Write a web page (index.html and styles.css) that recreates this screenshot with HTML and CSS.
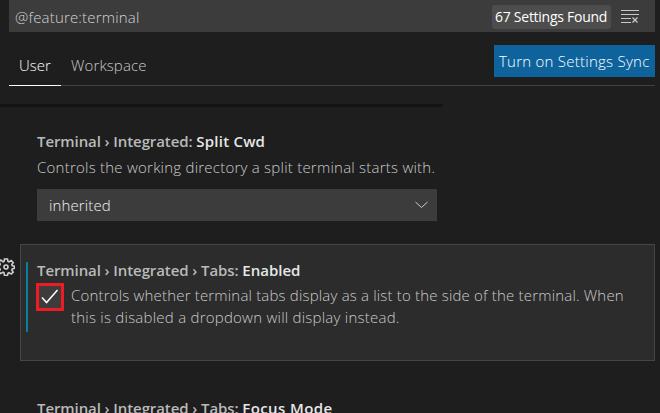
FILE: index.html
```html
<!DOCTYPE html>
<html lang="en">
<head>
<meta charset="utf-8">
<title>Settings</title>
<link rel="stylesheet" href="styles.css">
</head>
<body>
<main class="editor">
  <div class="search">
    <span class="query">@feature:terminal</span>
    <span class="count">67 Settings Found</span>
    <svg class="clear" width="19" height="14" viewBox="0 0 19 14" fill="none" stroke="#c8c8c8"><path d="M0 .5h18M0 4.500h18M0 8.500h10M0 12.500h10"/><path d="M11.500 7.500l5 5M16.500 7.500l-5 5" stroke-width="1.300"/></svg>
  </div>
  <nav class="tabs">
    <span class="tab active">User</span>
    <span class="tab">Workspace</span>
    <button class="sync">Turn on Settings Sync</button>
  </nav>
  <div class="shadow"></div>
  <section class="setting">
    <h2><span class="path">Terminal › Integrated: </span><span class="name split">Split Cwd</span></h2>
    <p class="cwd">Controls the working directory a split terminal starts with.</p>
    <div class="select"><span>inherited</span><svg width="13" height="8" viewBox="0 0 13 8" fill="none" stroke="#ccc"><path d="M.5 1l6 5.500 6-5.500"/></svg></div>
  </section>
  <section class="focused">
    <svg class="gear" width="18" height="18" viewBox="-9 -9 18 18" fill="none" stroke="#d0d0d0" stroke-width="1.600"><path d="M-1.500-8h3l.5 2.400 1 .5 2.200-1.400 2 2-1.400 2.100.5 1.200 2.200.4v2.200l-2.200.5-.5 1.200 1.400 2-2 2-2.200-1.400-1 .5-.5 2.300h-3L-2 5.700l-1-.5-2.200 1.400-2-2 1.400-2-.5-1.200-2.200-.5v-2.200l2.200-.4.5-1.200-1.400-2.100 2-2L-3-5.100l1-.5z"/><circle r="2"/></svg>
    <div class="modified">
      <h2><span class="path">Terminal › Integrated › Tabs: </span><span class="name">Enabled</span></h2>
      <div class="option">
        <div class="check"><svg width="18" height="16" viewBox="0 0 18 16" fill="none" stroke="#fff" stroke-width="1.500"><path d="M1 8.500l4.500 5L16.500 1"/></svg></div>
        <p><span class="line1">Controls whether terminal tabs display as a list to the side of the terminal. When</span><br><span class="line2">this is disabled a dropdown will display instead.</span></p>
      </div>
    </div>
  </section>
  <section class="setting next">
    <h2><span class="path">Terminal › Integrated › Tabs: </span><span class="name focus">Focus Mode</span></h2>
  </section>
</main>
</body>
</html>
```
FILE: styles.css
```css
* { box-sizing: border-box; }
body { margin: 0; background: #1e1e1e; color: #cacaca; font: 300 15px/22px "Open Sans", "Noto Sans", sans-serif; overflow: hidden; white-space: nowrap; }
.editor { width: 660px; height: 413px; overflow: hidden; }
h2, p { margin: 0; }
.search { display: flex; align-items: center; height: 32px; margin: 0 5px 0 9px; padding: 0 15px 0 6px; background: #3c3c3c; }
.query { flex: 1; padding-top: 1px; letter-spacing: .18px; color: #d2d2d2; }
.count { width: 119px; height: 24px; margin: 2px 10px 0 0; padding-left: 3px; border-radius: 3px; background: #4d4d4d; color: #fff; font-size: 14px; font-weight: 400; line-height: 24px; letter-spacing: -.26px; }
.clear { margin-top: 1px; }
.tabs { display: flex; align-items: flex-end; height: 54px; margin: 0 5px 0 9px; border-bottom: 1px solid #414141; }
.tab { height: 32px; padding: 0 10px; margin-bottom: -1px; letter-spacing: .12px; }
.tab.active { width: 52px; color: #fff; border-bottom: 1px solid #fff; letter-spacing: 0; }
.sync { width: 161px; height: 32px; margin: 0 0 8px auto; padding: 0 5px; border: 0; background: #0e639c; color: #fff; font: inherit; letter-spacing: .25px; text-align: left; }
.shadow { width: 443px; height: 3px; margin-top: 18px; background: #141414; }
.setting { padding: 23px 0 0 37px; }
h2 { font-size: 15px; font-weight: 600; line-height: 22px; white-space: pre; color: #bababa; }
.path { letter-spacing: -.09px; }
.name { color: #e7e7e7; }
.split { letter-spacing: .22px; }
.focus { letter-spacing: .4px; }
.cwd { margin-top: 4px; letter-spacing: .235px; }
.select { display: flex; align-items: center; justify-content: space-between; width: 400px; height: 32px; margin-top: 11px; padding: 0 9px 0 12px; background: #3c3c3c; color: #f0f0f0; letter-spacing: .12px; }
.focused { position: relative; width: 635px; height: 117px; margin: 23px 0 0 20px; padding: 17px 0 0 5px; border: 1px solid #454545; background: #2c2c2c; }
.gear { position: absolute; left: -24px; top: 13px; }
.modified { height: 70px; padding-left: 9px; border-left: 2px solid #0c7d9d; }
.modified h2 { height: 21px; line-height: 17px; }
.option { display: flex; gap: 7px; }
.option p { padding-top: 1px; }
.line1 { letter-spacing: .18px; }
.line2 { letter-spacing: .24px; }
.check { display: grid; place-items: center; width: 28px; height: 28px; margin-left: -1px; border: 3px solid #ed1c24; background: #3c3c3c; }
.next { padding-top: 36px; }
```
